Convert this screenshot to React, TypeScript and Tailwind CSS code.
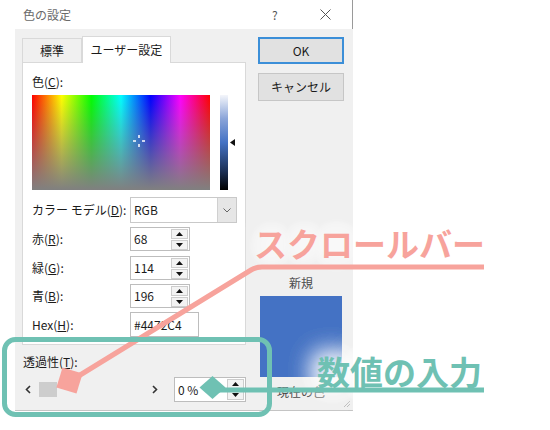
import React from "react";

function Spin() {
  return (
    <div className="flex flex-col w-[17px] h-[21px] gap-px">
      <div className="flex-1 bg-[#f3f3f3] border border-[#cdcdcd] flex items-center justify-center">
        <svg width="7" height="4" viewBox="0 0 7 4"><polygon points="0,4 3.5,0 7,4" fill="#111" /></svg>
      </div>
      <div className="flex-1 bg-[#f3f3f3] border border-[#cdcdcd] flex items-center justify-center">
        <svg width="7" height="4" viewBox="0 0 7 4"><polygon points="0,0 3.5,4 7,0" fill="#111" /></svg>
      </div>
    </div>
  );
}

function NumInput({ value }: { value: string }) {
  return (
    <div className="w-[60px] h-[24px] bg-white border border-[#bdbdbd] flex items-center pl-[3px] pr-px">
      <span className="flex-1">{value}</span>
      <Spin />
    </div>
  );
}

function Row({ label, u, value, mt }: { label: string; u: string; value: string; mt: string }) {
  return (
    <div className={"flex items-center h-[24px] " + mt}>
      <div className="w-[98px]">
        {label}(<span className="underline">{u}</span>):
      </div>
      <NumInput value={value} />
    </div>
  );
}

export default function App() {
  return (
    <div className="relative w-[550px] h-[430px] bg-white overflow-hidden font-['Noto_Sans_CJK_JP','Noto_Sans',sans-serif] text-[12px] text-[#1b1b1b]">
      <div className="w-[353px] h-[411px] flex flex-col">
        {/* title bar */}
        <div className="h-[29px] flex items-center border-r border-[#9a9a9a]">
          <div className="pl-[23px] flex-1 text-[#6a6a6a] text-[12px]">色の設定</div>
          <div className="w-[8px] text-[#555] text-[12px]">?</div>
          <div className="ml-[40px] mr-[21px] flex items-center">
            <svg width="11" height="11" viewBox="0 0 11 11">
              <line x1="0.5" y1="0.5" x2="10.5" y2="10.5" stroke="#555" strokeWidth="1" />
              <line x1="10.5" y1="0.5" x2="0.5" y2="10.5" stroke="#555" strokeWidth="1" />
            </svg>
          </div>
        </div>
        {/* body */}
        <div className="relative ml-[15px] flex-1 bg-[#f0f0f0] border-b border-[#c4c4c4] flex pl-[7px] pt-[6px] gap-[12px]">
          {/* left column */}
          <div className="w-[224px] flex flex-col">
            <div className="flex items-end h-[27px]">
              <div className="w-[60px] h-[24px] border border-b-0 border-[#d9d9d9] bg-[#f0f0f0] flex items-center justify-center">
                標準
              </div>
              <div className="w-[89px] h-[27px] -mb-px z-10 bg-white border border-b-0 border-[#d9d9d9] flex items-center justify-center">
                ユーザー設定
              </div>
            </div>
            <div className="h-[283px] bg-white border border-[#d9d9d9] pl-[9px] pt-[11px] flex flex-col">
              <div className="h-[16px] leading-[16px]">
                色(<span className="underline">C</span>):
              </div>
              <div className="mt-[5px] flex items-center">
                <div className="relative w-[178px] h-[95px] bg-[linear-gradient(to_right,#ff0000,#ffff00,#00ff00,#00ffff,#0000ff,#ff00ff,#ff0000)]">
                  <div className="w-full h-full bg-[linear-gradient(to_bottom,rgba(128,128,128,0),#808080)]" />
                  <svg className="absolute left-[99px] top-[38px]" width="16" height="16" viewBox="0 0 16 16">
                    <line x1="8" y1="2" x2="8" y2="5" stroke="#fff" strokeWidth="1.5" />
                    <line x1="8" y1="11" x2="8" y2="14" stroke="#fff" strokeWidth="1.5" />
                    <line x1="2" y1="8" x2="5" y2="8" stroke="#fff" strokeWidth="1.5" />
                    <line x1="11" y1="8" x2="14" y2="8" stroke="#fff" strokeWidth="1.5" />
                  </svg>
                </div>
                <div className="ml-[10px] w-[8px] h-[95px] bg-[linear-gradient(to_bottom,#f4f6fb,#8aa4d8_25%,#4472c4_50%,#1c3056_80%,#000000)]" />
                <svg className="ml-[2px]" width="5" height="7" viewBox="0 0 5 7">
                  <polygon points="0,3.5 5,0 5,7" fill="#111" />
                </svg>
              </div>
              <div className="mt-[7px] flex items-center h-[26px]">
                <div className="w-[98px]">
                  カラー モデル(<span className="underline">D</span>):
                </div>
                <div className="w-[107px] h-[26px] bg-white border border-[#c9c9c9] flex items-center">
                  <span className="flex-1 pl-[3px]">RGB</span>
                  <div className="w-[19px] h-full bg-[#e6e6e6] border-l border-[#d0d0d0] flex items-center justify-center">
                    <svg width="8" height="5" viewBox="0 0 8 5">
                      <polyline points="0.5,0.5 4,4 7.5,0.5" fill="none" stroke="#666" strokeWidth="1" />
                    </svg>
                  </div>
                </div>
              </div>
              <Row label="赤" u="R" value="68" mt="mt-[4px]" />
              <Row label="緑" u="G" value="114" mt="mt-[5px]" />
              <Row label="青" u="B" value="196" mt="mt-[4px]" />
              <div className="flex items-center h-[25px] mt-[4px]">
                <div className="w-[98px]">
                  Hex(<span className="underline">H</span>):
                </div>
                <div className="w-[69px] h-[25px] bg-white border border-[#bdbdbd] flex items-center pl-[3px]">
                  #4472C4
                </div>
              </div>
            </div>
            <div className="mt-[9px] h-[16px] leading-[16px] pl-px">
              透過性(<span className="underline">T</span>):
            </div>
            <div className="mt-[7px] h-[25px] flex items-center">
              <div className="w-[152px] h-[16px] flex items-center">
                <svg className="ml-[3px]" width="6" height="9" viewBox="0 0 6 9">
                  <polyline points="5,1 1.5,4.5 5,8" fill="none" stroke="#333" strokeWidth="1.6" />
                </svg>
                <div className="ml-[8px] w-[18px] h-[15px] bg-[#cdcdcd]" />
                <div className="flex-1" />
                <svg className="mr-[16px]" width="6" height="9" viewBox="0 0 6 9">
                  <polyline points="1,1 4.5,4.5 1,8" fill="none" stroke="#333" strokeWidth="1.6" />
                </svg>
              </div>
              <div className="w-[72px] h-[25px] bg-white border border-[#bdbdbd] flex items-center pl-[3px] pr-px">
                <span className="flex-1">0 %</span>
                <Spin />
              </div>
            </div>
          </div>
          {/* right column */}
          <div className="w-[86px] flex flex-col">
            <div className="mt-[2px] h-[27px] bg-[#e1e1e1] border-2 border-[#3c8fd8] flex items-center justify-center">
              OK
            </div>
            <div className="mt-[9px] h-[28px] bg-[#e1e1e1] border border-[#c6c6c6] flex items-center justify-center">
              キャンセル
            </div>
            <div className="mt-[175px] h-[14px] leading-[14px] text-center text-[#444]">新規</div>
            <div className="mt-[6px] mx-[2px] h-[81px] bg-[#4472c4]" />
            <div className="mt-[8px] h-[14px] leading-[14px] text-center text-[#444]">現在の色</div>
          </div>
          <svg className="absolute right-[2px] bottom-[2px]" width="10" height="10" viewBox="0 0 10 10">
            <line x1="9" y1="3" x2="3" y2="9" stroke="#b5b5b5" strokeWidth="1" />
            <line x1="9" y1="6" x2="6" y2="9" stroke="#b5b5b5" strokeWidth="1" />
          </svg>
        </div>
      </div>

      {/* annotation text with glow */}
      <div className="absolute left-[254px] top-[227px] text-[33px] leading-none font-bold text-[#f7a39c] whitespace-nowrap [text-shadow:0_0_34px_#fff,0_0_34px_#fff,0_0_30px_#fff,0_0_30px_#fff,0_0_20px_#fff]">
        スクロールバー
      </div>
      <div className="absolute left-[317px] top-[355px] text-[33px] leading-none font-bold text-[#6fc1b3] whitespace-nowrap [text-shadow:0_0_30px_#fff,0_0_30px_#fff,0_0_30px_#fff,0_0_20px_#fff]">
        数値の入力
      </div>

      {/* annotation drawing */}
      <svg className="absolute left-0 top-0 pointer-events-none" width="550" height="430" viewBox="0 0 550 430">
        <path d="M 484 267 H 262 Q 256 267 251 270 L 72 380" fill="none" stroke="#f7a39c" strokeWidth="5" />
        <rect x="59" y="370" width="21" height="21" fill="#f7a39c" transform="rotate(17 69.5 380.5)" />
        <rect x="4.5" y="339.5" width="265" height="75" rx="11" fill="none" stroke="#6fc1b3" strokeWidth="5" />
        <path d="M 212 390 H 484" fill="none" stroke="#6fc1b3" strokeWidth="5" />
        <polygon points="212.5,376 225.5,387.5 212.5,399 199.5,387.5" fill="#6fc1b3" />
      </svg>
    </div>
  );
}
